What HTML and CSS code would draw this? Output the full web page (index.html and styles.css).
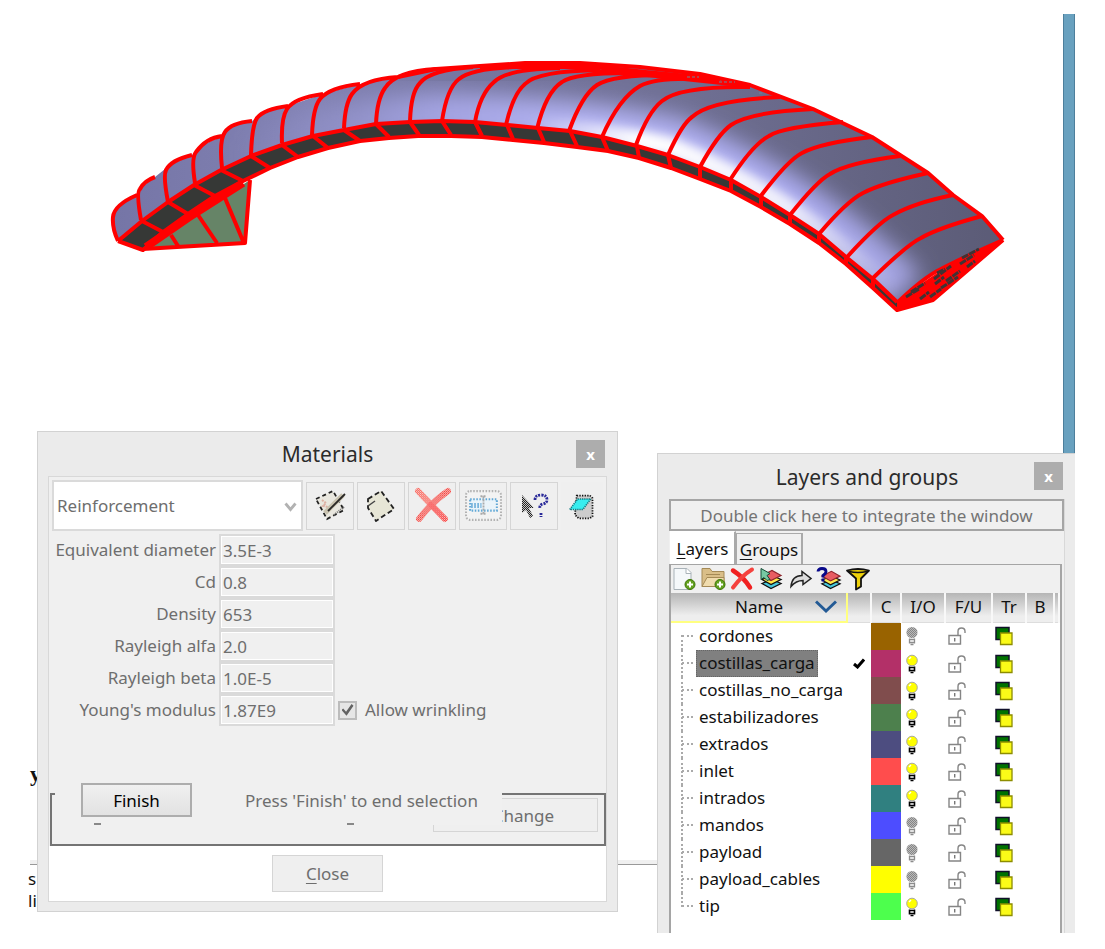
FILE: index.html
```html
<!DOCTYPE html>
<html lang="en">
<head>
<meta charset="utf-8">
<title>Materials and layers</title>
<link rel="stylesheet" href="styles.css">
</head>
<body>
<svg width="0" height="0" class="defs" aria-hidden="true">
  <defs>
    <pattern id="dither" width="2" height="2" patternUnits="userSpaceOnUse"><rect width="1" height="1" fill="#efefef"/><rect x="1" y="1" width="1" height="1" fill="#efefef"/></pattern>
    <symbol id="bulb-on" viewBox="0 0 14 20">
      <circle cx="7" cy="6.500" r="5.300" fill="#ff0" stroke="#a8a8a0" stroke-width="1"/>
      <path d="M4 5l2-2" stroke="#fff" stroke-width="1.500"/>
      <path d="M4.500 12.500v5M9.500 12.500v5M4 13.500h6M4.500 16.500h5M5.500 18.500h3" stroke="#000" stroke-width="1.600" fill="none"/>
    </symbol>
    <symbol id="bulb-off" viewBox="0 0 14 20">
      <circle cx="7" cy="6.500" r="5.500" fill="#858585"/>
      <circle cx="7" cy="6.500" r="6" fill="url(#dither)" opacity=".5"/>
      <path d="M4.500 12.500v5M9.500 12.500v5M4 13.500h6M4.500 16.500h5M5.500 18.500h3" stroke="#8c8c8c" stroke-width="1.300" fill="none"/>
    </symbol>
    <symbol id="lock" viewBox="0 0 20 20">
      <path d="M2 9.500h11.500v8.500h-11.500zM11 9.500v-4q0-3.500 3.500-3.500t3.500 3.500v1.500" fill="none" stroke="#858585" stroke-width="1.400"/>
      <path d="M7.700 12v3.500" stroke="#777" stroke-width="1.400"/>
    </symbol>
    <symbol id="trans" viewBox="0 0 18 20">
      <path d="M1 1.500h13v12h-13z" fill="#007200" stroke="#10102a" stroke-width="1.500"/>
      <path d="M5.500 7h11.500v11.500h-11.500z" fill="#fbfb18" stroke="#8d8d00" stroke-width="1.300"/>
    </symbol>
    <symbol id="plus" viewBox="0 0 12 12">
      <circle cx="6" cy="6" r="5" fill="#62a01e" stroke="#3d7409"/><path d="M6 3v6M3 6h6" stroke="#fff" stroke-width="2"/>
    </symbol>
    <symbol id="stack" viewBox="0 0 26 24">
      <path d="M4 17l10-4 9 4-10 5z" fill="#49c8dc" stroke="#111" stroke-width="1.300"/>
      <path d="M4 13l10-4 9 4-10 5z" fill="#ffe94d" stroke="#111" stroke-width="1.300"/>
      <path d="M4 9l10-5 9 5-10 5z" fill="#e85c62" stroke="#8f252c" stroke-width="1.200"/>
    </symbol>
  </defs>
</svg>

<main class="desktop">
  <svg class="viewport" viewBox="0 0 1105 330" role="img" aria-label="Paraglider canopy model">
    <defs>
      <linearGradient id="skin" x1="112" y1="0" x2="1003" y2="0" gradientUnits="userSpaceOnUse">
        <stop offset="0" stop-color="#7575a6"/><stop offset=".22" stop-color="#8282b3"/><stop offset=".4" stop-color="#7676a0"/><stop offset=".65" stop-color="#6f6f93"/><stop offset="1" stop-color="#5b5b76"/>
      </linearGradient>
      <linearGradient id="glow" x1="230" y1="0" x2="897" y2="0" gradientUnits="userSpaceOnUse">
        <stop offset="0" stop-color="#9696d0" stop-opacity="0"/><stop offset=".3" stop-color="#a2a2e0"/><stop offset=".55" stop-color="#b4b4f4"/><stop offset=".85" stop-color="#acacf0"/><stop offset="1" stop-color="#a4a4e2"/>
      </linearGradient>
      <linearGradient id="shine" x1="530" y1="0" x2="897" y2="0" gradientUnits="userSpaceOnUse">
        <stop offset="0" stop-color="#fff" stop-opacity="0"/><stop offset=".3" stop-color="#fff"/><stop offset=".7" stop-color="#fff" stop-opacity=".8"/><stop offset="1" stop-color="#fff" stop-opacity="0"/>
      </linearGradient>
      <filter id="soft" x="-10%" y="-20%" width="120%" height="140%"><feGaussianBlur stdDeviation="11"/></filter>
      <filter id="softer" x="-10%" y="-20%" width="120%" height="140%"><feGaussianBlur stdDeviation="5"/></filter>
      <clipPath id="skin-clip"><path d="M118 241L113 222L115 212Q122 202 137 195L142 187L155 177L170 165L192 155L203 145L222 136L230 127L252 121L263 113L288 106L323 94L360 84L398 77L436 69L480 66L525 63H580L640 67L700 74L750 86L813 109L872 137L900 155L928 173L953 195L982 216L1003 240Q940 262 897 303L873 279L846 257L819 234L790 215L761 197L731 180L700 167L668 155L637 146L602 137L570 131L538 128L507 125L475 122L442 121L410 122L376 124L344 130L313 136L282 145L251 156L221 170L194 185L168 202L142 221Z"/></clipPath>
    </defs>
    <g clip-path="url(#skin-clip)">
      <path d="M100 50H1020V320H100Z" fill="url(#skin)"/>
      <path d="M230 165Q320 120 442 116Q570 120 672 140Q800 190 905 290" fill="none" stroke="url(#glow)" stroke-width="46" filter="url(#soft)"/>
      <path d="M530 127Q620 135 670 147Q793 195 899 298" fill="none" stroke="url(#shine)" stroke-width="20" filter="url(#softer)"/>
    </g>
    <path fill="#668467" d="M143 249L250 180L245 243Z"/>
    <path fill="#363836" d="M118 241L142 221L168 202L194 185L221 170L251 156L282 145L313 136L344 130L376 124L410 122L442 121L475 122L507 125L538 128L570 131L602 137L637 146L668 155L700 167L731 180L761 197L790 215L819 234L846 257L873 279L897 302V311L873 288L846 264L819 243L790 224L761 207L731 191L700 179L671 168L639 158L608 151L577 147L544 143L513 140L482 137L451 136L418 136L389 138L360 141L328 148L298 157L270 168L243 181L215 196L188 214L163 232L143 250Z"/>
    <path fill="#f00" d="M897 303Q930 275 957 262L1003 240L933 300L897 311Z"/>
    <g class="wire">
      <path d="M118 241L142 221L168 202L194 185L221 170L251 156L282 145L313 136L344 130L376 124L410 122L442 121L475 122L507 125L538 128L570 131L602 137L637 146L668 155L700 167L731 180L761 197L790 215L819 234L846 257L873 279L897 302"/>
      <path d="M118 241L143 250L163 232L188 214L215 196L243 181L270 168L298 157L328 148L360 141L389 138L418 136L451 136L482 137L513 140L544 143L577 147L608 151L639 158L671 168L700 179L731 191L761 207L790 224L819 243L846 264L873 288L897 310L933 300L1003 240"/>
      <path d="M398 77L436 69L480 66L525 63H580L640 67L700 74L750 85L813 109L872 137L900 155L928 173L953 195L982 216L1003 240"/>
      <path d="M143 249L245 243L250 180M225 198L243 241M198 215L217 243M171 235L178 246"/>
      <path class="thick" d="M146 247L188 218L243 183"/>
      <path d="M142 221L163 232M168 202L188 214M194 185L215 196M221 170L243 181M251 156L270 168M282 145L298 157M313 136L328 148M344 130L360 141M376 124L389 137M410 122L419 135M442 121L451 135M475 122L482 136M507 125L513 139M538 128L544 142M570 131L577 146M602 137L608 151M637 146L639 158M668 155L671 168M700 167V178M731 180V191M761 197V207M790 215V224M819 234V243M846 257V264M873 279V288"/>
      <path d="M118 241Q112 228 113 217Q114 205 137 195M141 220Q136 192 140 189Q144 181 155 177M168 202Q163 176 166 170Q171 160 192 155M195 183Q191 158 196 152Q206 138 222 136M222 168Q219 140 225 132Q231 123 252 121M251 155Q252 125 257 118Q264 109 288 106M282 143Q281 118 287 109Q294 98 323 94M312 135Q313 108 320 99Q330 87 360 84M344 128Q345 104 352 94Q363 79 398 77M376 124Q377 99 385 88Q396 71 436 69M410 121Q411 92 420 83Q430 70 473 67M442 121Q447 88 459 79Q470 69 513 67M475 122Q480 94 494 82Q507 69 560 68M506 125Q513 94 525 84Q537 71 600 70M537 129Q546 92 562 82Q575 72 640 73M569 131Q582 95 597 85Q612 75 667 75M602 137Q619 98 640 86Q659 76 713 80M636 145Q648 112 662 101Q680 86 750 87M668 155Q682 124 692 117Q710 100 780 97M700 167Q718 134 731 125Q750 112 813 109M730 180Q753 144 769 136Q782 127 843 122M760 197Q788 160 802 153Q820 143 872 137M790 215Q817 181 830 174Q847 163 900 156M819 234Q847 201 863 193Q882 183 928 173M847 257Q879 222 893 215Q914 203 953 195M873 278Q908 244 921 238Q938 228 982 216M897 303Q924 277 941 269Q962 258 1003 240"/>
      <path d="M480 67H600L700 78M560 64L720 79M600 70L750 86"/>
    </g>
    <path class="streaks" d="M906 297L919 289M911 292L925 283M934 279L951 266M937 273L945 269M960 264L974 255M962 258L979 249M941 288L958 277M946 281L960 271M920 299L929 292M930 297L941 289M935 284L944 277M967 267L975 261"/>
    <path class="specks" d="M687 77h12M719 82h16M759 93h3"/>
  </svg>
  <div class="edge-bar"></div>
  <div class="back-line"></div>
  <p class="back-text back-mark">y</p>
  <p class="back-text back-code">si<br>li</p>

  <section class="window materials" aria-labelledby="mat-title">
    <header class="titlebar"><h1 id="mat-title">Materials</h1><button class="close-x" aria-label="Close Materials">x</button></header>
    <div class="mat-body">
      <div class="mat-tools">
        <div class="combo">
          <select aria-label="Material type"><option>Reinforcement</option></select>
          <svg viewBox="0 0 12 10"><path d="M1 1.500L6 7.500L11 1.500" fill="none" stroke="#b2b2b2" stroke-width="2.800"/></svg>
        </div>
        <button class="tool" aria-label="Edit material"><svg viewBox="0 0 32 32">
          <path d="M2 9L19 1L30 20L13 29Z" fill="#e9e7df" stroke="#222" stroke-width="1.800" stroke-dasharray="4 3"/>
          <path d="M8 10l4 3-3 3 5 1" fill="none" stroke="#ddb0a4" stroke-width="2" stroke-dasharray="2 1"/>
          <path d="M11 23L29 5" stroke="#c9c3b0" stroke-width="5"/><path d="M14 21L31 4" stroke="#292725" stroke-width="1.800"/><path d="M20 25l10-8" stroke="#777" stroke-width="2" stroke-dasharray="1 1"/>
        </svg></button>
        <button class="tool" aria-label="New material"><svg viewBox="0 0 32 32">
          <path d="M3 9L16 1L29 19L11 31L3 18Z" fill="#e7e6d6" stroke="#222" stroke-width="1.800" stroke-dasharray="5 3"/><path d="M3 16l7-5" stroke="#444" stroke-width="1.500"/>
        </svg></button>
        <button class="tool" aria-label="Delete material"><svg viewBox="0 0 36 36">
          <path d="M4 4L30 31" stroke="#ff5449" stroke-width="6" stroke-linecap="round"/><path d="M33 4Q18 14 5 31" fill="none" stroke="#fa3d37" stroke-width="6" stroke-linecap="round"/><path d="M16 17L30 31" stroke="#f22" stroke-width="5" stroke-linecap="round"/><path d="M0 0h36v36h-36z" fill="url(#dither)" opacity=".8"/>
        </svg></button>
        <button class="tool" aria-label="Rename material"><svg viewBox="0 0 36 36">
          <rect x="1" y="4" width="34" height="28" rx="4" fill="#f3f3f3" stroke="#b2b2b2" stroke-width="2" stroke-dasharray="1.500 1.500"/>
          <rect x="5" y="12" width="26" height="11" fill="#eaf4fa" stroke="#61a8d6" stroke-width="2" stroke-dasharray="1.500 1.500"/><path d="M6 18h10" stroke="#67abd8" stroke-width="5" stroke-dasharray="1.500 1.500"/><path d="M18 9v17M15 9h6M15 26h6" stroke="#aaa" stroke-width="1.800" stroke-dasharray="2 1"/>
        </svg></button>
        <button class="tool" aria-label="Help"><svg viewBox="0 0 32 32">
          <path d="M4 5V23L8 20L12 28L15 26L11 18H16Z" fill="#222"/><path d="M4 5h13v24h-13z" fill="url(#dither)" opacity=".8"/>
          <path d="M17 10q0-5 6-5t6 5q0 3-4 4t-3 5M23 23v4" fill="none" stroke="#292999" stroke-width="2.800" stroke-dasharray="2 1"/>
        </svg></button>
        <button class="tool flat" aria-label="Assign to layer"><svg viewBox="0 0 32 32">
          <path d="M10 4h15l3 3v21l-3 2H12l-4-4z" fill="#ccc" stroke="#111" stroke-width="2" stroke-dasharray="1.500 1.500"/>
          <path d="M11 8h15L17 20H2Z" fill="#37edef" stroke="#137b83" stroke-width="1.800" stroke-dasharray="1.500 1"/>
        </svg></button>
      </div>
      <form class="props">
        <label for="p1">Equivalent diameter</label><input id="p1" type="text" value="3.5E-3">
        <label for="p2">Cd</label><input id="p2" type="text" value="0.8">
        <label for="p3">Density</label><input id="p3" type="text" value="653">
        <label for="p4">Rayleigh alfa</label><input id="p4" type="text" value="2.0">
        <label for="p5">Rayleigh beta</label><input id="p5" type="text" value="1.0E-5">
        <label for="p6">Young's modulus</label><input id="p6" type="text" value="1.87E9">
        <label class="check"><input type="checkbox" checked><span>Allow wrinkling</span></label>
      </form>
      <div class="assign">
        <button class="plain change">Change</button>
        <div class="prompt"><button class="finish">Finish</button><span>Press 'Finish' to end selection</span></div>
        <i class="mnemonic first"></i><i class="mnemonic second"></i>
      </div>
      <footer class="mat-foot"><button class="plain close"><u>C</u>lose</button></footer>
    </div>
  </section>

  <section class="window layers" aria-labelledby="lay-title">
    <header class="titlebar"><h1 id="lay-title">Layers and groups</h1><button class="close-x" aria-label="Close Layers and groups">x</button></header>
    <div class="lay-body">
      <button class="integrate">Double click here to integrate the window</button>
      <nav class="tabs"><button class="tab active"><u>L</u>ayers</button><button class="tab"><u>G</u>roups</button></nav>
      <div class="lay-panel">
        <div class="lay-tools">
          <button aria-label="New layer"><svg viewBox="0 0 26 24"><path d="M3 2h13l4 4v17H3z" fill="#f5f8fa" stroke="#a9b2b8"/><path d="M15 2v5h5" fill="#fff" stroke="#a9b2b8"/><use href="#plus" x="13" y="12" width="12" height="12"/></svg></button>
          <button aria-label="New child layer"><svg viewBox="0 0 26 24"><path d="M2 2h8l2 3h12v15H2z" fill="#d9be88" stroke="#a58a56"/><path d="M6 8h14M2 20l5-9h17v9z" fill="#f0dcae" stroke="#a58a56"/><use href="#plus" x="14" y="12" width="12" height="12"/></svg></button>
          <button aria-label="Delete layer"><svg viewBox="0 0 26 24"><path d="M4 4Q15 11 21 21" stroke="#f02020" stroke-width="4.500" fill="none" stroke-linecap="round"/><path d="M23 3Q13 9 4 21" stroke="#f5423e" stroke-width="4" fill="none" stroke-linecap="round"/></svg></button>
          <button aria-label="Send to layer"><svg viewBox="0 0 26 24"><use href="#stack" width="26" height="24"/><path d="M3 2l9 5-3 2 3 4-3 1-3-3-3 2z" fill="#77c9a3" stroke="#164d37"/></svg></button>
          <button aria-label="Move"><svg viewBox="0 0 26 24"><path d="M4 20Q5 9 15 9V5L24 12L16 18V14Q9 14 4 20Z" fill="#ddd" stroke="#222" stroke-width="1.500"/></svg></button>
          <button aria-label="Layer of entity"><svg viewBox="0 0 26 24"><use href="#stack" x="2" y="1" width="25" height="23"/><path d="M2 5q0-3 4-3t4 3q0 2-3 4v2M7 12v3" fill="none" stroke="#08088a" stroke-width="2.800"/></svg></button>
          <button aria-label="Filter"><svg viewBox="0 0 26 24"><path d="M2 4Q13 1 24 4L16 12V20L11 23V12Z" fill="#efd20a" stroke="#111" stroke-width="1.800" stroke-linejoin="round"/><path d="M4 5q9 2 18 0" fill="none" stroke="#111" stroke-width="1.500"/></svg></button>
        </div>
        <table>
          <colgroup><col><col class="w-mark"><col class="w-c"><col class="w-io"><col class="w-fu"><col class="w-tr"><col class="w-b"><col class="w-end"></colgroup>
          <thead><tr><th class="name-head"><span>Name<svg viewBox="0 0 22 14"><path d="M1 1.500L11 11L21 1.500" fill="none" stroke="#235a95" stroke-width="3"/></svg></span></th><th></th><th>C</th><th>I/O</th><th>F/U</th><th>Tr</th><th>B</th><th></th></tr></thead>
          <tbody>
            <tr><td class="name"><span>cordones</span></td><td></td><td class="c-brown"></td><td><svg class="bulb"><use href="#bulb-off"/></svg></td><td><svg class="lock"><use href="#lock"/></svg></td><td><svg class="trans"><use href="#trans"/></svg></td><td></td><td></td></tr>
            <tr><td class="name"><span class="selected">costillas_carga</span></td><td><svg class="mark" viewBox="0 0 12 11"><path d="M1 6L4.500 9L11 1.500" fill="none" stroke="#000" stroke-width="3"/></svg></td><td class="c-magenta"></td><td><svg class="bulb"><use href="#bulb-on"/></svg></td><td><svg class="lock"><use href="#lock"/></svg></td><td><svg class="trans"><use href="#trans"/></svg></td><td></td><td></td></tr>
            <tr><td class="name"><span>costillas_no_carga</span></td><td></td><td class="c-maroon"></td><td><svg class="bulb"><use href="#bulb-on"/></svg></td><td><svg class="lock"><use href="#lock"/></svg></td><td><svg class="trans"><use href="#trans"/></svg></td><td></td><td></td></tr>
            <tr><td class="name"><span>estabilizadores</span></td><td></td><td class="c-green"></td><td><svg class="bulb"><use href="#bulb-on"/></svg></td><td><svg class="lock"><use href="#lock"/></svg></td><td><svg class="trans"><use href="#trans"/></svg></td><td></td><td></td></tr>
            <tr><td class="name"><span>extrados</span></td><td></td><td class="c-navy"></td><td><svg class="bulb"><use href="#bulb-on"/></svg></td><td><svg class="lock"><use href="#lock"/></svg></td><td><svg class="trans"><use href="#trans"/></svg></td><td></td><td></td></tr>
            <tr><td class="name"><span>inlet</span></td><td></td><td class="c-red"></td><td><svg class="bulb"><use href="#bulb-on"/></svg></td><td><svg class="lock"><use href="#lock"/></svg></td><td><svg class="trans"><use href="#trans"/></svg></td><td></td><td></td></tr>
            <tr><td class="name"><span>intrados</span></td><td></td><td class="c-teal"></td><td><svg class="bulb"><use href="#bulb-on"/></svg></td><td><svg class="lock"><use href="#lock"/></svg></td><td><svg class="trans"><use href="#trans"/></svg></td><td></td><td></td></tr>
            <tr><td class="name"><span>mandos</span></td><td></td><td class="c-blue"></td><td><svg class="bulb"><use href="#bulb-off"/></svg></td><td><svg class="lock"><use href="#lock"/></svg></td><td><svg class="trans"><use href="#trans"/></svg></td><td></td><td></td></tr>
            <tr><td class="name"><span>payload</span></td><td></td><td class="c-gray"></td><td><svg class="bulb"><use href="#bulb-off"/></svg></td><td><svg class="lock"><use href="#lock"/></svg></td><td><svg class="trans"><use href="#trans"/></svg></td><td></td><td></td></tr>
            <tr><td class="name"><span>payload_cables</span></td><td></td><td class="c-yellow"></td><td><svg class="bulb"><use href="#bulb-off"/></svg></td><td><svg class="lock"><use href="#lock"/></svg></td><td><svg class="trans"><use href="#trans"/></svg></td><td></td><td></td></tr>
            <tr><td class="name"><span>tip</span></td><td></td><td class="c-lime"></td><td><svg class="bulb"><use href="#bulb-on"/></svg></td><td><svg class="lock"><use href="#lock"/></svg></td><td><svg class="trans"><use href="#trans"/></svg></td><td></td><td></td></tr>
          </tbody>
        </table>
      </div>
    </div>
  </section>
</main>
</body>
</html>
```
FILE: styles.css
```css
* { box-sizing: border-box; }
body { margin: 0; background: #fff; font-family: "Noto Sans", "Open Sans", sans-serif; font-size: 17px; color: #111; }
button, input, select { font: inherit; color: inherit; margin: 0; padding: 0; border-radius: 0; }
h1, p { margin: 0; font-weight: 400; }
u { text-underline-offset: 3px; }
.defs { position: absolute; }

.desktop { position: relative; min-height: 933px; overflow: hidden; }
.viewport { display: block; width: 100%; }
.wire { fill: none; stroke: #f00; stroke-width: 4; stroke-linejoin: round; }
.wire .thick { stroke-width: 8; }
.streaks { fill: none; stroke: #403334; stroke-width: 3; stroke-dasharray: 7 1; }
.specks { stroke: #6f8495; stroke-width: 1; stroke-dasharray: 3 2; }
.edge-bar { position: absolute; left: 1063px; top: 14px; width: 12px; height: 440px; background: #69a1bf; border-left: 1px solid #4d7f9c; border-right: 1px solid #4d7f9c; }
.back-line { position: absolute; left: 30px; top: 860px; width: 628px; height: 5px; background: #f0f0f0; border-bottom: 1px solid #999; }
.back-text { position: absolute; left: 30px; }
.back-mark { top: 761px; font: bold 22px "Liberation Serif", serif; }
.back-code { top: 868px; left: 28px; line-height: 22px; }

.window { position: absolute; background: #ebebeb; border: 1px solid #d2d2d2; }
.titlebar { position: relative; display: flex; align-items: center; justify-content: center; height: 44px; }
.titlebar h1 { font-size: 21px; line-height: 28px; color: #2b2b2b; }
.close-x { position: absolute; right: 2px; top: 8px; width: 29px; height: 28px; border: 0; background: #adadad; color: #fff; font-size: 15px; font-weight: 700; line-height: 24px; }

.materials { left: 37px; top: 431px; width: 581px; padding: 0 10px 9px; color: #6e6e6e; }
.mat-body { border: 1px solid #d8d8d8; background: #f0f0f0; }
.mat-tools { display: flex; align-items: center; gap: 3px; padding: 3px; }
.combo { position: relative; flex: 1; }
.combo select { width: 100%; height: 51px; padding: 0 3px; appearance: none; border: 2px solid #dadada; background: #fff; }
.combo svg { position: absolute; right: 6px; top: 22px; width: 13px; height: 10px; }
.tool { display: grid; place-items: center; width: 48px; height: 48px; border: 1px solid #d5d5d5; background: #efefef; }
.tool svg { width: 32px; height: 32px; }
.tool[aria-label^="Delete"] svg, .tool[aria-label^="Rename"] svg { width: 37px; height: 37px; }
.tool.flat { width: 42px; border: 0; }
.tool.flat svg { width: 28px; height: 28px; }

.props { display: grid; grid-template-columns: 167px 116px auto; column-gap: 3px; grid-auto-rows: 32px; align-items: center; justify-content: start; }
.props label { grid-column: 1; text-align: right; line-height: 24px; white-space: nowrap; }
.props input[type=text] { grid-column: 2; width: 100%; height: 32px; padding: 0 2px; background: #f0f0f0; border: 2px solid #dadada; box-shadow: inset 0 0 0 1px #fff; }
.props label.check { display: flex; align-items: center; gap: 8px; grid-column: 3; grid-row: 6; }
.check input { appearance: none; display: grid; place-items: center; width: 19px; height: 19px; border: 2px solid #bcbcbc; background: #e6e6e6; }
.check input::before { content: ""; width: 12px; height: 12px; background: #636363; clip-path: polygon(0 50%, 14% 38%, 38% 64%, 84% 0, 100% 14%, 42% 98%); }

.assign { position: relative; display: flex; justify-content: flex-end; height: 53px; margin: 67px 0 0 1px; padding: 3px 6px 0 0; border: 2px solid #747474; }
.plain { border: 1px solid #d5d5d5; background: #efefef; }
.change { width: 165px; height: 34px; padding-left: 16px; }
.prompt { position: absolute; left: 3px; top: -20px; right: 102px; height: 50px; display: flex; align-items: center; gap: 53px; padding-left: 26px; background: #f0f0f0; }
.finish { width: 111px; height: 34px; border: 2px solid #adadad; background: linear-gradient(#f0f0f0, #e2e2e2); color: #000; }
.mnemonic { position: absolute; top: 28px; width: 7px; height: 2px; background: #888; }
.mnemonic.first { left: 42px; }
.mnemonic.second { left: 295px; }
.mat-foot { display: flex; justify-content: center; padding: 9px 0; background: #fff; }
.close { width: 111px; height: 37px; }

.layers { left: 657px; top: 453px; width: 418px; height: 480px; border-right: 0; border-bottom: 0; overflow: hidden; padding: 0 10px 0 11px; }
.layers .titlebar { height: 45px; }
.lay-body { display: flex; flex-direction: column; height: 434px; border-right: 1px solid #d8d8d8; background: #f0f0f0; }
.integrate { height: 32px; border: 2px solid #a5a5a5; background: #f0f0f0; color: #747474; }
.tabs { display: flex; align-items: flex-end; height: 33px; padding-left: 1px; }
.tab { width: 67px; height: 31px; border: 1px solid #aaa; border-width: 1px 2px 0 1px; background: #f0f0f0; }
.tab.active { height: 33px; width: 66px; background: #fff; border-color: #fff #aaa #fff #fff; }
.lay-panel { flex: 1; margin-right: 2px; border: solid #a5a5a5; border-width: 1px 2px 0; background: #fff; }
.lay-tools { display: flex; gap: 3px; height: 28px; padding: 1px 0; background: #f0f0f0; }
.lay-tools button { width: 26px; height: 25px; border: 0; background: none; }
.lay-tools svg { display: block; width: 26px; height: 25px; }

table { width: 100%; table-layout: fixed; border-collapse: collapse; }
.w-mark { width: 24px; }
.w-c { width: 30px; }
.w-io { width: 44px; }
.w-fu { width: 47px; }
.w-tr { width: 34px; }
.w-b { width: 28px; }
.w-end { width: 5px; }
th, td { padding: 0; text-align: center; }
th { height: 29px; font-weight: 400; line-height: 24px; background: linear-gradient(#b5b5b5, #eee 80%); border-right: 2px solid #f8f8f8; border-bottom: 1px solid #ddd; }
.name-head { border-right: 2px solid #ffff80; border-bottom: 2px solid #ffff80; }
.name-head span { display: flex; align-items: center; justify-content: flex-end; gap: 32px; padding-right: 9px; }
.name-head svg { width: 22px; height: 14px; }
td { height: 27px; line-height: 25px; vertical-align: middle; }
td svg { display: block; margin: 0 auto; }
.name { position: relative; text-align: left; padding-left: 25px; }
.name span { display: inline-block; padding: 0 3px; height: 27px; vertical-align: top; }
.name .selected { background: #808080; outline: 1px dotted #666; outline-offset: -1px; }
.name::before { content: ""; position: absolute; left: 10px; top: 0; bottom: 0; border-left: 2px dotted #aaa; }
.name::after { content: ""; position: absolute; left: 11px; top: 12px; width: 11px; border-top: 2px dotted #aaa; }
tbody tr:first-child .name::before { top: 12px; }
tbody tr:last-child .name::before { bottom: 13px; }
td .bulb { width: 14px; height: 20px; margin-left: 4px; }
td .lock { width: 20px; height: 20px; margin-left: 2px; }
td .trans { width: 18px; height: 20px; margin-left: 3px; }
.mark { width: 12px; height: 11px; }
.c-brown { background: #996300; }
.c-magenta { background: #b33068; }
.c-maroon { background: #804d4d; }
.c-green { background: #4d804d; }
.c-navy { background: #4d4d80; }
.c-red { background: #ff4d4d; }
.c-teal { background: #308080; }
.c-blue { background: #4d4dff; }
.c-gray { background: #666; }
.c-yellow { background: #ff0; }
.c-lime { background: #4dff4d; }
```
